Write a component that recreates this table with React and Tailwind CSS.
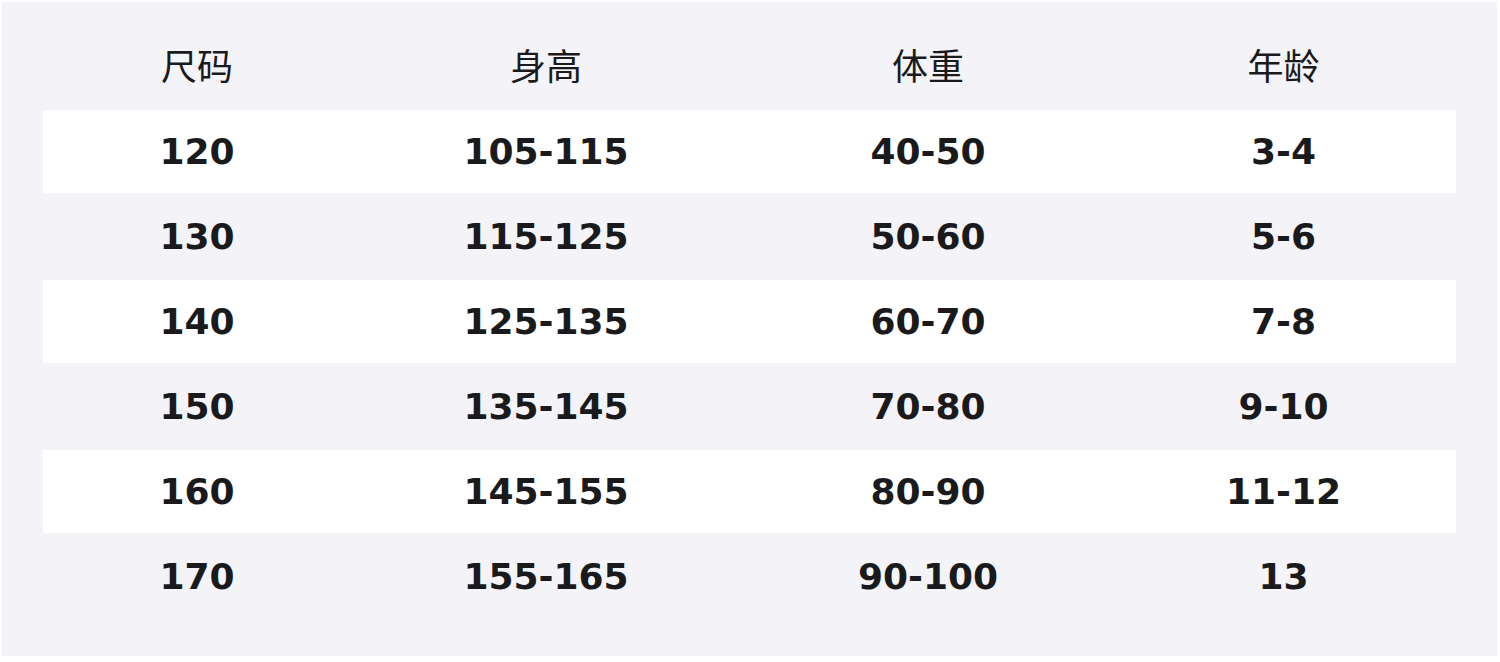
export default function App() {
  const head = ["尺码", "身高", "体重", "年龄"];
  const rows = [
    ["120", "105-115", "40-50", "3-4"],
    ["130", "115-125", "50-60", "5-6"],
    ["140", "125-135", "60-70", "7-8"],
    ["150", "135-145", "70-80", "9-10"],
    ["160", "145-155", "80-90", "11-12"],
    ["170", "155-165", "90-100", "13"],
  ];
  return (
    <div className="w-[1500px] h-[662px] bg-white pt-[2px] pl-[2px] pr-[3px] pb-[6px]">
      <div className="h-full bg-[#f3f3f8] px-[41px] pt-[23px] text-[#1a1a1c]">
        <div className="flex flex-col gap-[2px]">
          <div className="grid grid-cols-[308px_390px_374px_1fr] pr-[4px] pb-[6px] h-[83px] items-center text-[36px] font-normal" style={{ fontFamily: '"Noto Sans CJK SC", "Noto Sans", sans-serif' }}>
            {head.map((h) => (
              <div key={h} className="text-center leading-none">{h}</div>
            ))}
          </div>
          {rows.map((r, i) => (
            <div
              key={i}
              className={`grid grid-cols-[308px_390px_374px_1fr] pr-[4px] h-[83px] items-center text-[36px] font-bold ${i % 2 === 0 ? "bg-white" : ""}`}
              style={{ fontFamily: '"DejaVu Sans", sans-serif' }}
            >
              {r.map((c, j) => (
                <div key={j} className="text-center leading-none">{c}</div>
              ))}
            </div>
          ))}
        </div>
      </div>
    </div>
  );
}
